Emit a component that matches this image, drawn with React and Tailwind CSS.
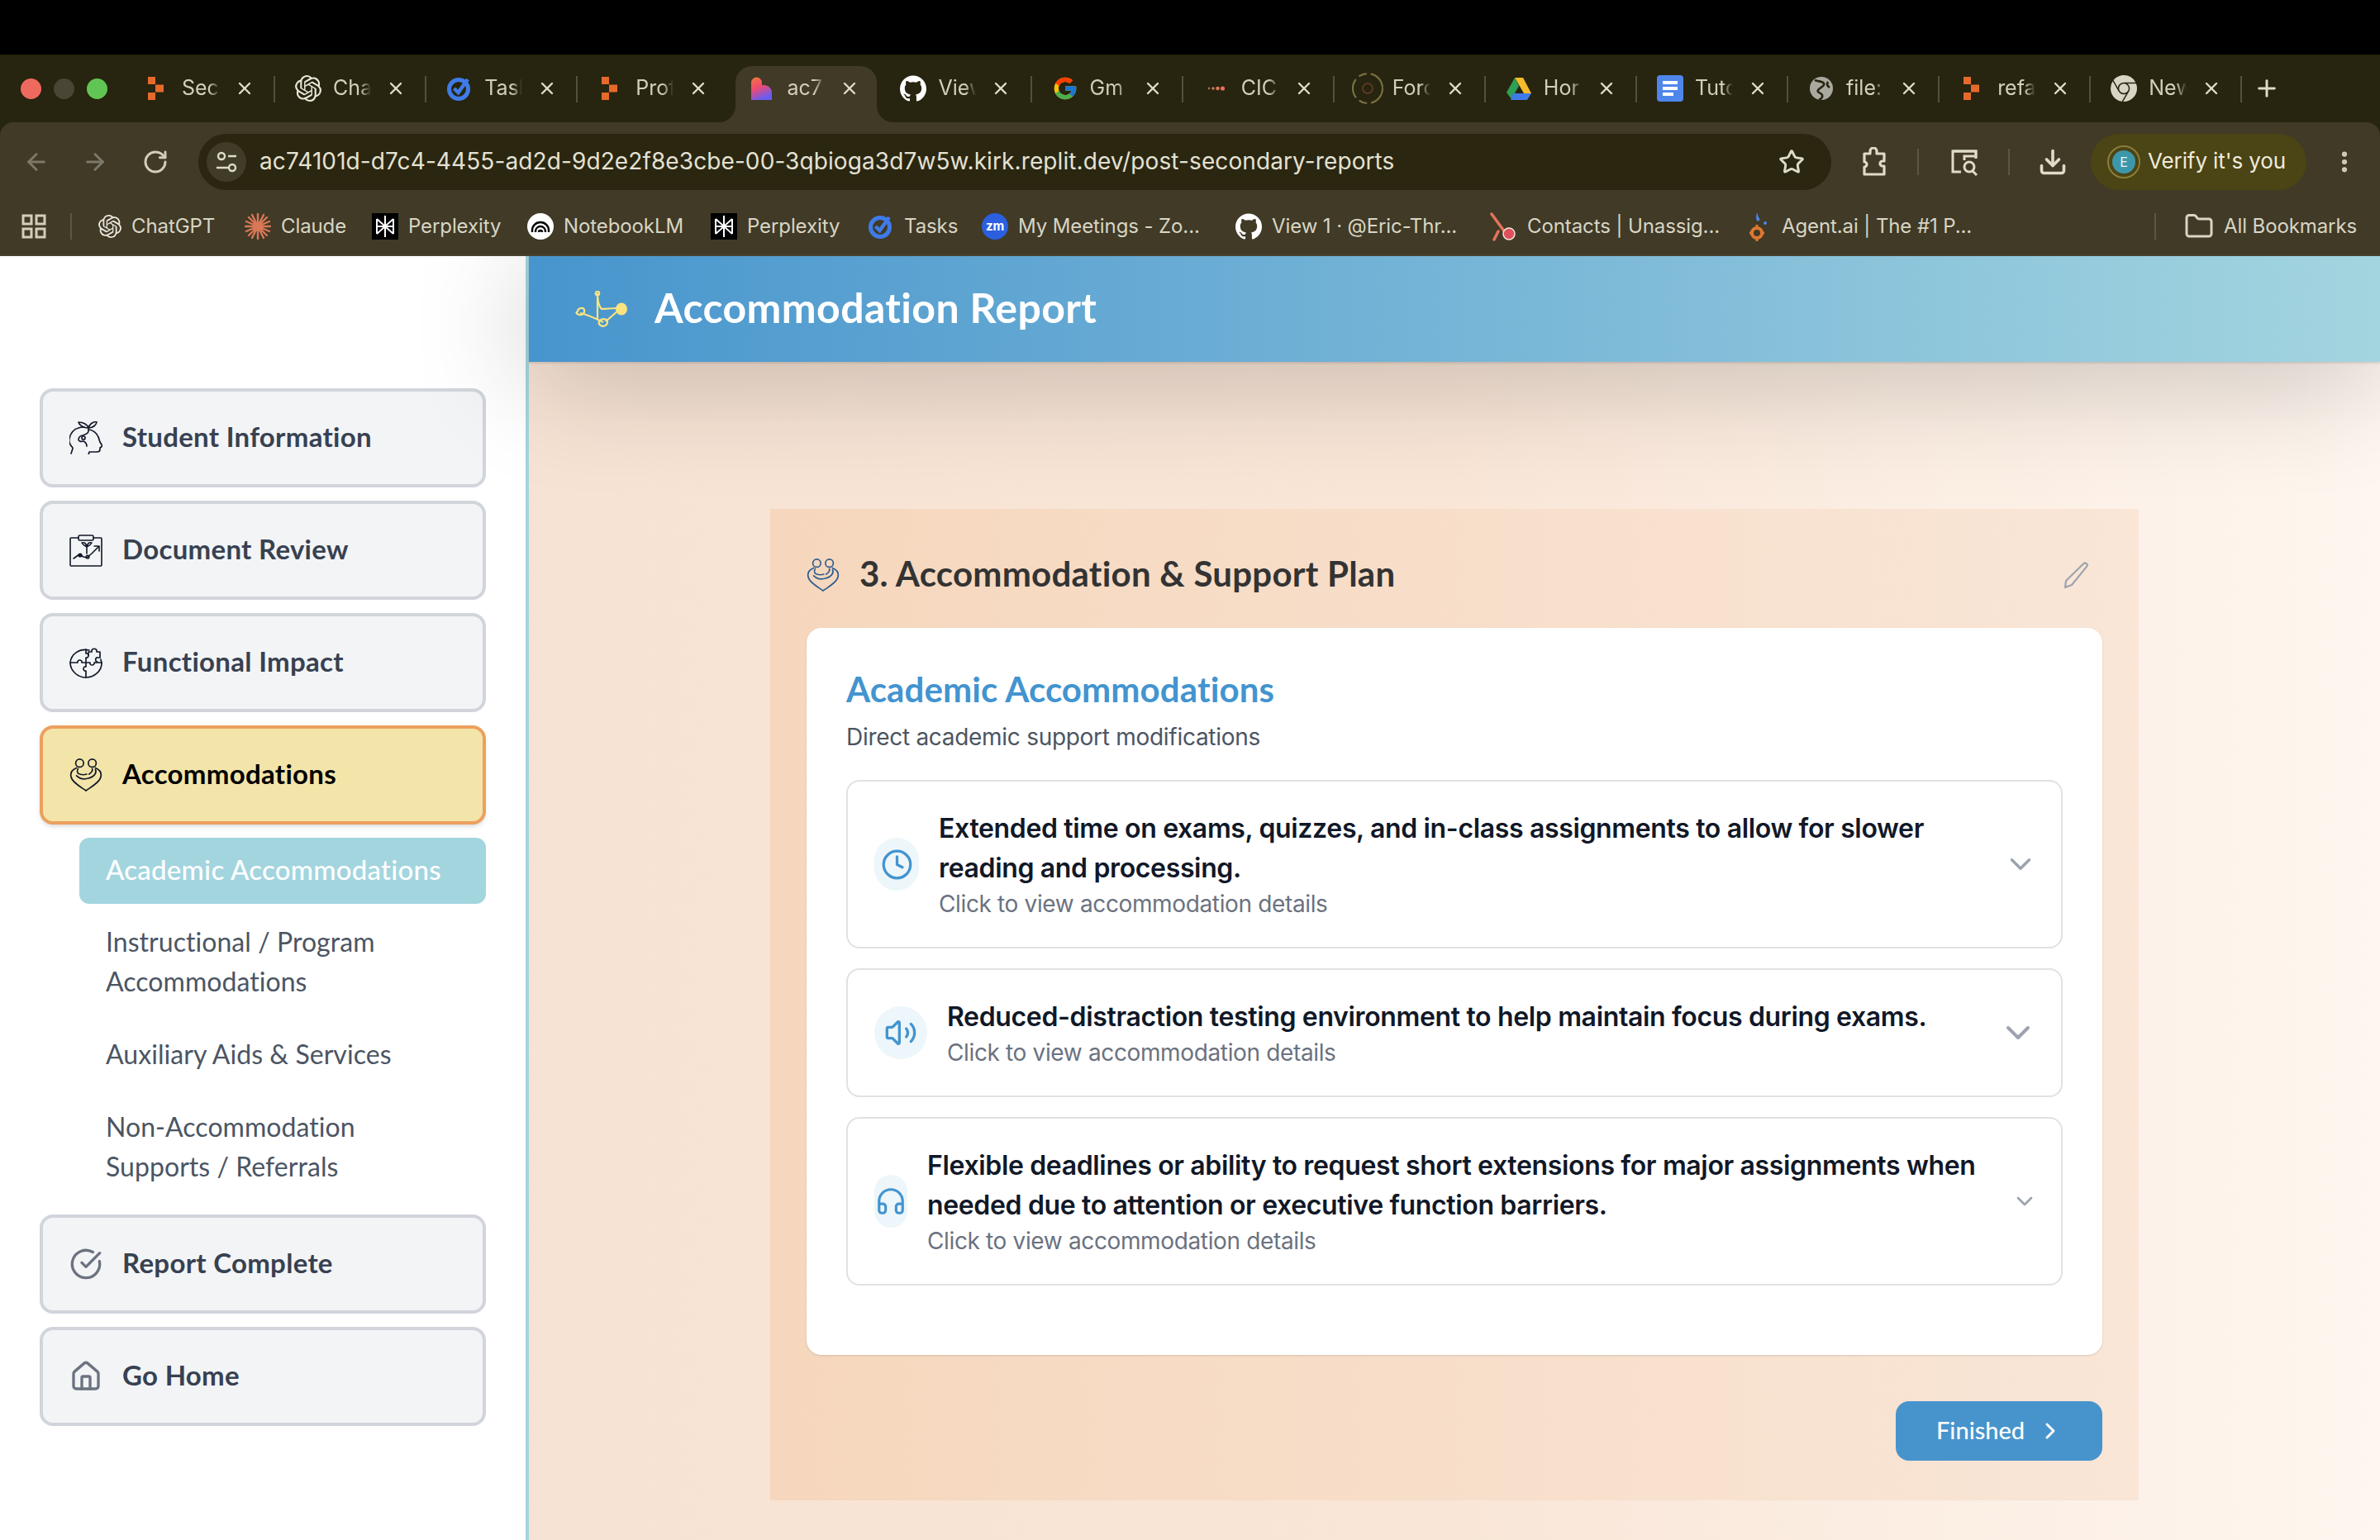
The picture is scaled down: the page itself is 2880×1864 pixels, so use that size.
import React from "react";
import { ArrowLeft, ArrowRight, RotateCw, Star, Download, EllipsisVertical, X, Plus, Folder, Clock, Volume2, Headphones, ChevronDown, ChevronRight, CircleCheckBig, House } from "lucide-react";
import { SiOpenai, SiGithub, SiGooglechrome } from "react-icons/si";
import { FcGoogle } from "react-icons/fc";

const ReplitIcon = () => (
  <svg viewBox="0 0 32 32" className="w-8 h-8"><g fill="#e66a2c"><rect x="5" y="2" width="9" height="9" /><rect x="14" y="11.5" width="10" height="9" /><rect x="5" y="21" width="9" height="9" /></g></svg>
);
const OpenAIIcon = ({ cls }) => <SiOpenai className={cls} color="#e9e7dc" />;
const TasksIcon = () => (
  <svg viewBox="0 0 32 32" className="w-8 h-8"><circle cx="15" cy="17" r="11.5" fill="none" stroke="#3f7be8" strokeWidth="5" /><path d="M9.5 16l5 5L26 5" fill="none" stroke="#3f7be8" strokeWidth="4.5" /></svg>
);
const LovableIcon = () => (
  <svg viewBox="0 0 32 32" className="w-8 h-8"><defs><linearGradient id="lov" x1="0" y1="0" x2="0.4" y2="1"><stop offset="0" stopColor="#f2793a" /><stop offset="0.5" stopColor="#ef4a72" /><stop offset="1" stopColor="#6a5cf0" /></linearGradient></defs><path d="M3 9a6.5 6.5 0 0 1 13 0v3h3a9 9 0 0 1 9 9v9H3z" fill="url(#lov)" /></svg>
);
const GithubIcon = () => <SiGithub className="w-8 h-8" color="#ffffff" />;
const CicIcon = () => (
  <svg viewBox="0 0 32 32" className="w-8 h-8"><circle cx="7" cy="16" r="1.4" fill="#9a6f55" /><circle cx="12" cy="16" r="1.8" fill="#c77a5a" /><circle cx="17.5" cy="16" r="2.2" fill="#e07a5f" /><circle cx="23.5" cy="16" r="2.6" fill="#ee6a5f" /></svg>
);
const ForgeIcon = () => (
  <svg viewBox="0 0 40 40" className="w-10 h-10 shrink-0"><circle cx="20" cy="20" r="18" fill="none" stroke="#7a7040" strokeWidth="2.2" strokeDasharray="24 5 10 5" /><circle cx="20" cy="20" r="6" fill="none" stroke="#5a3b22" strokeWidth="2" /></svg>
);
const DriveIcon = () => (
  <svg viewBox="0 0 32 32" className="w-8 h-8"><path d="M11 3h10l10 19h-9z" fill="#f5bb2c" /><path d="M11 3l5 10L7 29 1 21z" fill="#2f9e57" /><path d="M9 22h22l-5 8H6z" fill="#3f7be8" /></svg>
);
const DocsIcon = () => (
  <svg viewBox="0 0 32 32" className="w-8 h-8"><rect x="0" y="0" width="32" height="32" rx="4" fill="#4f86ec" /><rect x="7" y="7" width="18" height="4" fill="#fff" /><rect x="7" y="14" width="18" height="4" fill="#fff" /><rect x="7" y="21" width="13" height="4" fill="#fff" /></svg>
);
const GlobeIcon = () => (
  <svg viewBox="0 0 32 32" className="w-8 h-8"><circle cx="16" cy="16" r="14" fill="#a9a99f" /><path d="M8 6c5 2 9 1 11 4s-5 5-7 8 4 3 5 6-2 5-4 6M24 8c-2 3-1 5 2 7" fill="none" stroke="#27240f" strokeWidth="2.6" /></svg>
);
const ChromeIcon = () => <SiGooglechrome className="w-8 h-8" color="#d8d5c4" />;
const GoogleIcon = () => <FcGoogle className="w-8 h-8" />;

const tabs = [
  ["Sec", <ReplitIcon />], ["Cha", <OpenAIIcon cls="w-8 h-8" />], ["Tasl", <TasksIcon />], ["Prof", <ReplitIcon />],
  ["ac7", <LovableIcon />, true], ["View", <GithubIcon />], ["Gm", <GoogleIcon />], ["CIC", <CicIcon />],
  ["Forc", <ForgeIcon />], ["Hor", <DriveIcon />], ["Tuto", <DocsIcon />], ["file:", <GlobeIcon />], ["refa", <ReplitIcon />], ["New", <ChromeIcon />],
];

const Tab = ({ label, icon, active, noSep }) => (
  <div className="relative w-[183.1px] h-[68px] shrink-0">
    {active && (
      <div className="absolute inset-y-0 left-[8px] w-[171px] bg-[#403a27] rounded-t-[20px]">
        <svg viewBox="0 0 20 20" className="absolute bottom-0 -left-[20px] w-5 h-5"><path d="M20 0v20H0a20 20 0 0 0 20-20z" fill="#403a27" /></svg>
        <svg viewBox="0 0 20 20" className="absolute bottom-0 -right-[20px] w-5 h-5"><path d="M0 0v20h20A20 20 0 0 1 0 0z" fill="#403a27" /></svg>
      </div>
    )}
    <div className="relative flex items-center h-[54px] pl-[24px]">
      <div className="w-8 h-8 flex items-center justify-center shrink-0">{icon}</div>
      <div className="ml-[14px] w-[46px] overflow-hidden whitespace-nowrap text-[25px] text-[#d2cfb9] font-['Inter'] [mask-image:linear-gradient(to_right,black_72%,transparent)]">{label}</div>
      <X className="ml-[18px] w-[24px] h-[24px] text-[#dedbc8] shrink-0" strokeWidth={2.4} />
    </div>
    {!noSep && <div className="absolute right-0 top-[12px] w-[2px] h-[32px] bg-[#55503a]" />}
  </div>
);

const Sep = () => <div className="w-[2px] h-[32px] bg-[#5c5742]" />;

const TuneIcon = () => (
  <svg viewBox="0 0 32 32" className="w-8 h-8" fill="none" stroke="#dedbc8" strokeWidth="2.4"><circle cx="10" cy="9" r="4" /><path d="M18 9h10M4 23h14" /><circle cx="23" cy="23" r="4" /></svg>
);
const ExtensionIcon = () => (
  <svg viewBox="0 0 32 36" className="w-8 h-9" fill="none" stroke="#dedbc8" strokeWidth="3.2" strokeLinejoin="round"><path d="M4 8h7V5a4 4 0 0 1 8 0v3h9v9h-2a3 3 0 0 0 0 6h2v10H4v-9a3 3 0 0 0 0-6z" /></svg>
);
const TabSearchIcon = () => (
  <svg viewBox="0 0 36 36" className="w-9 h-9" fill="none" stroke="#dedbc8" strokeWidth="3"><path d="M14 30H4V5h28v9" /><path d="M4 5h28v6H18v5" /><circle cx="24" cy="24" r="6" /><path d="M28 29l5 5" /></svg>
);
const PerplexityIcon = () => (
  <svg viewBox="0 0 32 32" className="w-8 h-8"><rect width="32" height="32" fill="#000" /><path d="M16 3v26M6 7l10 9 10-9M6 7v9h20V7M6 25l10-9 10 9M6 16v9M26 16v9" fill="none" stroke="#fff" strokeWidth="2" /></svg>
);
const ClaudeIcon = () => (
  <svg viewBox="0 0 32 32" className="w-8 h-8" stroke="#d97757" strokeWidth="2.4" strokeLinecap="round"><path d="M16 1v30M1 16h30M5 5l22 22M27 5L5 27M9 2l14 28M23 2L9 30M2 10l28 12M30 10L2 22" /></svg>
);
const NotebookIcon = () => (
  <svg viewBox="0 0 32 32" className="w-8 h-8"><circle cx="16" cy="16" r="16" fill="#fff" /><path d="M6 23v-2a10 10 0 0 1 20 0v2M10 23v-1a6 6 0 0 1 12 0v1M14 23a2 2 0 0 1 4 0" fill="none" stroke="#000" strokeWidth="2.4" /></svg>
);
const ZoomIcon = () => (
  <svg viewBox="0 0 32 32" className="w-8 h-8"><circle cx="16" cy="16" r="16" fill="#2b5fe0" /><text x="16" y="21" textAnchor="middle" fontSize="15" fontWeight="700" fill="#fff" fontFamily="Inter">zm</text></svg>
);
const HubspotIcon = () => (
  <svg viewBox="0 0 36 36" className="w-9 h-9"><path d="M5 3l16 22M13 24L8 34" fill="none" stroke="#e5735b" strokeWidth="3.5" strokeLinecap="round" /><circle cx="26" cy="27" r="7" fill="#e0505c" stroke="#f1e8d8" strokeWidth="1.5" /></svg>
);
const AgentIcon = () => (
  <svg viewBox="0 0 32 36" className="w-8 h-9"><path d="M14 1l2 6 2 3-4 2-1-5z" fill="#4f86ec" /><circle cx="24" cy="14" r="2" fill="#4f86ec" /><circle cx="14" cy="26" r="6" fill="none" stroke="#e0762f" strokeWidth="4" /><path d="M14 18v-2M14 36v-3M7 26H5M23 26h-2" stroke="#e0762f" strokeWidth="3" /></svg>
);
const GridIcon = () => (
  <svg viewBox="0 0 30 30" className="w-[30px] h-[30px]" fill="none" stroke="#d2cfb9" strokeWidth="3"><rect x="2" y="2" width="10" height="10" /><rect x="18" y="2" width="10" height="10" /><rect x="2" y="18" width="10" height="10" /><rect x="18" y="18" width="10" height="10" /></svg>
);

const bookmarks = [
  ["ChatGPT", <OpenAIIcon cls="w-[28px] h-[28px]" />, "w-[177px]"],
  ["Claude", <ClaudeIcon />, "w-[154px]"],
  ["Perplexity", <PerplexityIcon />, "w-[188px]"],
  ["NotebookLM", <NotebookIcon />, "w-[222px]"],
  ["Perplexity", <PerplexityIcon />, "w-[190px]"],
  ["Tasks", <TasksIcon />, "w-[138px]"],
  ["My Meetings - Zo...", <ZoomIcon />, "w-[307px]"],
  ["View 1 · @Eric-Thr...", <SiGithub className="w-8 h-8" color="#fff" />, "w-[305px]"],
  ["Contacts | Unassig...", <HubspotIcon />, "w-[312px]"],
  ["Agent.ai | The #1 P...", <AgentIcon />, "w-[495px]"],
];

const HeadSprout = ({ cls }) => (
  <svg viewBox="0 0 40 40" className={cls} fill="none" stroke="currentColor" strokeWidth="1.7" strokeLinecap="round" strokeLinejoin="round">
    <path d="M2 39c1-3 2-5 2-7-3-3-5-7-4-11 1-7 6-12 11-13 2-1 4-1 7-1" />
    <path d="M24 10c5 1 9 4 11 9 1 2 1 4 2 6l3 5-3 2v2c0 2-2 3-4 3h-9l-1 4" />
    <path d="M23 8c-1-4-6-7-12-7 1 4 6 7 12 7zM23 8c1-4 5-7 10-8 0 4-4 8-10 8z" />
    <path d="M23 8v4c0 3-4 4-7 5-3 0-5 3-5 5 0 2 3 3 6 2 2 1 4 3 4 6" />
    <circle cx="17" cy="20" r="2" />
  </svg>
);
const ClipChart = ({ cls }) => (
  <svg viewBox="0 0 40 40" className={cls} fill="none" stroke="currentColor" strokeWidth="1.6" strokeLinecap="round" strokeLinejoin="round">
    <path d="M11 5H2a1 1 0 0 0-1 1v32a1 1 0 0 0 1 1h36a1 1 0 0 0 1-1V6a1 1 0 0 0-1-1h-9" />
    <rect x="11" y="2" width="18" height="6" rx="1.5" />
    <path d="M5 30l7-5 5 3 4 1 6-5 9-9M30 15h6v6M21 24v-9M21 16c-2-1-5-3-6-5 4-1 5 1 6 5zM21 16c2-1 5-3 6-5-4-1-5 1-6 5z" />
    <circle cx="13" cy="26" r="1.8" /><circle cx="22" cy="28" r="1.8" />
  </svg>
);
const PuzzleGlobe = ({ cls }) => (
  <svg viewBox="0 0 40 40" className={cls} fill="none" stroke="currentColor" strokeWidth="1.7" strokeLinecap="round" strokeLinejoin="round">
    <path d="M24 5C12 2 2 10 1 20c0 10 9 18 19 18s19-8 19-17c0-2-1-4-1-5" />
    <path d="M1 20h9c-1-4 6-4 5 0h5v-6c4 1 4-6 0-5V4M20 20v5c-4-1-4 6 0 5v8M20 20h5c-1 4 6 4 5 0h9" />
    <path d="M23 11V7h4c-1-5 7-5 6 0h4v7h-3c-3-1-3 6 0 5" />
  </svg>
);
const HeartHug = ({ cls, sw = 1.8 }) => (
  <svg viewBox="0 0 40 42" className={cls} fill="none" stroke="currentColor" strokeWidth={sw} strokeLinecap="round" strokeLinejoin="round">
    <circle cx="12" cy="6" r="5" /><circle cx="28" cy="6" r="5" />
    <path d="M8 12C3 14 0 18 1 23c1 7 12 13 19 18 7-5 18-11 19-18 1-5-2-9-7-11" />
    <path d="M10 13c-2 3-1 6 2 7 3 1 6 1 9 0M32 14c2 4-1 9-8 11-6 2-12 1-16-3M28 13c1 3-1 5-4 7" />
  </svg>
);

const NavButton = ({ icon, label, active }) => (
  <div className={active
    ? "h-[120px] rounded-[16px] border-[4px] border-[#eca05e] bg-[#f3e5a9] flex items-center pl-[32px] gap-[24px] text-black shadow-md"
    : "h-[120px] rounded-[16px] border-[4px] border-[#d1d5db] bg-[#f3f4f6] flex items-center pl-[32px] gap-[24px] text-[#374151]"}>
    {icon}
    <span className="font-['Lato'] font-bold text-[33px] tracking-[0.3px] pb-[2px]">{label}</span>
  </div>
);

const SubItem = ({ children, active }) => (
  <div className={active
    ? "ml-[48px] rounded-[12px] bg-[#a3d5df] text-white px-[32px] pt-[14px] pb-[18px] text-[33px] tracking-[0.25px] leading-[48px] font-['Lato'] font-medium"
    : "ml-[48px] px-[32px] pt-[14px] pb-[18px] text-[32px] tracking-[0.05px] leading-[48px] text-[#4b5563] font-['Lato']"}>{children}</div>
);

const AccRow = ({ bubble, icon, title, chevron }) => (
  <div className="rounded-[16px] border-2 border-[#e0e1e4] bg-white pl-[32px] pr-[28px] py-[32px] flex items-center">
    <div className={bubble}>{icon}</div>
    <div className="flex-1 min-w-0 ml-[24px]">
      <div className="font-['Inter'] font-semibold text-[32px] tracking-[-0.35px] leading-[48px] text-[#111827] pt-[1px] -mb-[1px]">{title}</div>
      <div className="font-['Inter'] text-[28px] tracking-[-0.36px] leading-[40px] text-[#6b7280]">Click to view accommodation details</div>
    </div>
    {chevron}
  </div>
);

export default function App() {
  return (
    <div className="w-[2880px] h-[1864px] overflow-hidden bg-white flex flex-col">
      <div className="relative z-20 shrink-0">
        <div className="h-[66px] bg-black" />
        <div className="h-[82px] bg-[#27240f] pt-[14px] flex">
          <div className="w-[150px] h-[54px] flex items-center pl-[25px] gap-[15px] shrink-0">
            <div className="w-[25px] h-[25px] rounded-full bg-[#ee6a5f]" />
            <div className="w-[25px] h-[25px] rounded-full bg-[#4a4636]" />
            <div className="w-[25px] h-[25px] rounded-full bg-[#61c554]" />
          </div>
          {tabs.map((t, i) => (
            <Tab key={i} label={t[0]} icon={t[1]} active={t[2]} noSep={i === 3 || i === 4} />
          ))}
          <div className="h-[54px] flex items-center ml-[14px]"><Plus className="w-8 h-8 text-[#dedbc8]" strokeWidth={2.2} /></div>
        </div>
        <div className="bg-[#27240f]">
          <div className="h-[96px] bg-[#403a27] rounded-tl-[16px] rounded-tr-[16px] flex items-center">
            <ArrowLeft className="ml-[28px] w-8 h-8 text-[#7d7968]" strokeWidth={2.2} />
            <ArrowRight className="ml-[39px] w-8 h-8 text-[#7d7968]" strokeWidth={2.2} />
            <RotateCw className="ml-[41px] w-8 h-8 text-[#d2cfb9]" strokeWidth={2.2} />
            <div className="ml-[36px] w-[1976px] h-[68px] rounded-full bg-[#2a2610] flex items-center pl-[10px] pr-[32px]">
              <div className="w-[48px] h-[48px] rounded-full bg-[#413c28] flex items-center justify-center shrink-0"><TuneIcon /></div>
              <div className="ml-[16px] flex-1 font-['Inter'] text-[28px] text-[#e4e1d3] whitespace-nowrap tracking-[0.1px] pb-[3px]">ac74101d-d7c4-4455-ad2d-9d2e2f8e3cbe-00-3qbioga3d7w5w.kirk.replit.dev/post-secondary-reports</div>
              <Star className="w-8 h-8 text-[#dedbc8] shrink-0" strokeWidth={2.2} />
            </div>
            <div className="ml-[36px]"><ExtensionIcon /></div>
            <div className="ml-[36px]"><Sep /></div>
            <div className="ml-[37px]"><TabSearchIcon /></div>
            <div className="ml-[35px]"><Sep /></div>
            <Download className="ml-[34px] w-9 h-9 text-[#dedbc8]" strokeWidth={2.4} />
            <div className="ml-[28px] w-[261px] h-[68px] rounded-full bg-[#4b4415] flex items-center pl-[20px]">
              <div className="w-[40px] h-[40px] rounded-full border-2 border-[#8a7e3a] flex items-center justify-center shrink-0">
                <div className="w-[28px] h-[28px] rounded-full bg-[#3d97ab] text-[#e8f4f6] text-[16px] font-['Inter'] flex items-center justify-center">E</div>
              </div>
              <span className="ml-[9px] font-['Inter'] text-[26px] tracking-[-0.1px] text-[#eeebdc] whitespace-nowrap pb-[3px]">Verify it's you</span>
            </div>
            <EllipsisVertical className="ml-[30px] w-8 h-8 text-[#d2cfb9]" strokeWidth={2.6} />
          </div>
        </div>
        <div className="h-[66px] bg-[#403a27] flex items-center pb-[4px] border-b-2 border-[#49442f]">
          <div className="ml-[26px]"><GridIcon /></div>
          <div className="ml-[29px]"><Sep /></div>
          <div className="ml-[32px] flex items-center">
            {bookmarks.map((b, i) => (
              <div key={i} className={"flex items-center gap-[12px] whitespace-nowrap font-['Inter'] text-[24px] tracking-[-0.1px] text-[#d8d5c4] shrink-0 " + b[2]}>
                {b[1]}<span>{b[0]}</span>
              </div>
            ))}
          </div>
          <Sep />
          <Folder className="ml-[34px] w-[36px] h-[36px] text-[#d8d5c4]" strokeWidth={2} />
          <span className="ml-[12px] font-['Inter'] text-[24px] tracking-[-0.1px] text-[#d8d5c4] whitespace-nowrap">All Bookmarks</span>
        </div>
      </div>

      <div className="flex-1 flex min-h-0">
        <aside className="w-[640px] shrink-0 bg-white border-r-[4px] border-[#a3d5df] pt-[160px] px-[48px]">
          <div className="w-[540px] flex flex-col gap-[16px]">
            <NavButton icon={<HeadSprout cls="w-10 h-10 text-[#111827]" />} label="Student Information" />
            <NavButton icon={<ClipChart cls="w-10 h-10 text-[#111827]" />} label="Document Review" />
            <NavButton icon={<PuzzleGlobe cls="w-10 h-10 text-[#111827]" />} label="Functional Impact" />
            <NavButton icon={<HeartHug cls="w-10 h-10 text-[#111827]" />} label="Accommodations" active />
            <div className="flex flex-col gap-[8px]">
              <SubItem active>Academic Accommodations</SubItem>
              <SubItem>Instructional / Program Accommodations</SubItem>
              <SubItem>Auxiliary Aids &amp; Services</SubItem>
              <SubItem>Non-Accommodation Supports / Referrals</SubItem>
            </div>
            <NavButton icon={<CircleCheckBig className="w-10 h-10 text-[#6b7280]" strokeWidth={2} />} label="Report Complete" />
            <NavButton icon={<House className="w-10 h-10 text-[#6b7280]" strokeWidth={2} />} label="Go Home" />
          </div>
        </aside>
        <main className="flex-1 min-w-0 bg-gradient-to-r from-[#f7e3d4] via-[#f9e6d7] to-[#fef6ef]">
          <header className="relative z-10 h-[128px] bg-gradient-to-r from-[#4795cd] to-[#a3d5df] shadow-[0_2px_2px_rgba(0,0,0,0.1),0_20px_140px_rgba(0,0,0,0.22)] flex items-center pl-[56px]">
            <svg viewBox="0 0 64 44" className="w-16 h-11 shrink-0">
              <g fill="none" stroke="#fbe37f" strokeWidth="2.2">
                <path d="M27 3c0 8 1 15 5 19 6 0 12-1 18-1M27 4v30M6 27c9 2 18 6 28 11M52 24L37 37" />
                <circle cx="27" cy="3" r="2.2" /><path d="M3 25c0-4 7-6 8-2s-3 7-6 6-5-2-2-4zM30 36c3-3 9-2 9 2s-5 6-8 4-3-4-1-6z" />
              </g>
              <ellipse cx="56" cy="22" rx="7" ry="7.5" fill="#fbe37f" />
            </svg>
            <h1 className="ml-[32px] font-['Lato'] font-bold text-[50px] tracking-[0.37px] text-white whitespace-nowrap pb-[4px]">Accommodation Report</h1>
          </header>
          <div className="pt-[178px] px-[292px]">
            <section className="h-[1200px] bg-gradient-to-r from-[#f6d7bd] to-[#f9e6d7] pt-[44px] px-[44px] pb-[48px]">
              <div className="h-[72px] mb-[28px] flex items-center">
                <HeartHug cls="w-10 h-10 text-[#2f5d8f]" sw={1.8} />
                <h2 className="ml-[24px] font-['Lato'] font-bold text-[42px] tracking-[0.24px] text-[#333333] whitespace-nowrap flex-1 pb-[3px]">3. Accommodation &amp; Support Plan</h2>
                <svg viewBox="0 0 32 32" className="w-8 h-8 mr-[16px] shrink-0" fill="none" stroke="#9ca3af" strokeWidth="2.2" strokeLinejoin="round"><path d="M25 2.5a2.6 2.6 0 0 1 4 3.4L11 28l-8 3 1-8z" /></svg>
              </div>
              <div className="h-[880px] bg-white rounded-[18px] shadow-sm pt-[48px] px-[48px]">
                <h3 className="font-['Lato'] font-bold text-[42px] tracking-[0.1px] leading-[52px] text-[#4394cf] mb-[13px]">Academic Accommodations</h3>
                <p className="font-['Inter'] text-[28px] tracking-[-0.29px] leading-[40px] text-[#4b5563] mb-[32px] -mt-[1px]">Direct academic support modifications</p>
                <div className="flex flex-col gap-[24px]">
                  <AccRow
                    bubble="w-[54px] h-[64px] rounded-full bg-[#edf6fa] flex items-center justify-center shrink-0"
                    icon={<Clock className="w-[39px] h-[39px] text-[#4394cf] shrink-0" strokeWidth={2} />}
                    title="Extended time on exams, quizzes, and in-class assignments to allow for slower reading and processing."
                    chevron={<ChevronDown className="w-[42px] h-[42px] text-[#9ca3af] shrink-0" strokeWidth={2} />}
                  />
                  <AccRow
                    bubble="w-[64px] h-[64px] rounded-full bg-[#edf6fa] flex items-center justify-center shrink-0"
                    icon={<Volume2 className="w-[40px] h-[40px] text-[#4394cf] shrink-0" strokeWidth={2} />}
                    title="Reduced-distraction testing environment to help maintain focus during exams."
                    chevron={<ChevronDown className="w-[48px] h-[48px] text-[#9ca3af] shrink-0" strokeWidth={2} />}
                  />
                  <AccRow
                    bubble="w-[40px] h-[64px] rounded-full bg-[#edf6fa] flex items-center justify-center shrink-0"
                    icon={<Headphones className="w-[38px] h-[38px] text-[#4394cf] shrink-0" strokeWidth={2} />}
                    title="Flexible deadlines or ability to request short extensions for major assignments when needed due to attention or executive function barriers."
                    chevron={<ChevronDown className="w-[32px] h-[32px] text-[#9ca3af] shrink-0" strokeWidth={2} />}
                  />
                </div>
              </div>
              <div className="mt-[56px] flex justify-end">
                <div className="w-[250px] h-[72px] rounded-[16px] bg-[#4794cd] flex items-center pl-[49px] gap-[15px] text-white">
                  <span className="font-['Lato'] font-medium text-[29px] pb-[2px]">Finished</span>
                  <ChevronRight className="w-8 h-8" strokeWidth={2.2} />
                </div>
              </div>
            </section>
          </div>
        </main>
      </div>
    </div>
  );
}
